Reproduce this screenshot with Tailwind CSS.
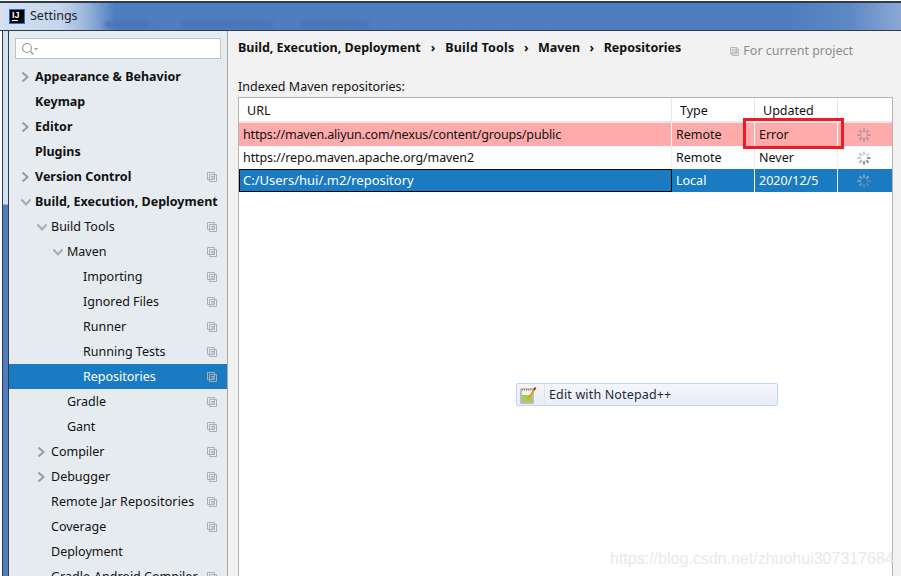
<!DOCTYPE html>
<html lang="en">
<head>
    <meta charset="UTF-8">
    <title>Settings</title>
    <script src="https://cdn.jsdelivr.net/npm/@tailwindcss/browser@4"></script>
</head>
<body class="relative w-[901px] h-[576px] overflow-hidden bg-white font-['Noto_Sans',sans-serif] text-[12.5px] text-[#111]">
    <svg class="hidden">
        <symbol id="copy" viewBox="0 0 10 10">
            <path d="M0.5 0.5H7.5V2.5H9.5V9.5H2.5V7.5H0.5Z M2.5 2.5H7.5V7.5H2.5Z M4 4.5H8 M4 6H8" fill="none" stroke="#a9b0b5" stroke-width="1"/>
        </symbol>
        <symbol id="right" viewBox="0 0 8 10"><path d="M1.5 0.5L6.5 5L1.5 9.5" fill="none" stroke="#9a9a9a" stroke-width="2"/></symbol>
        <symbol id="down" viewBox="0 0 10 8"><path d="M0.5 1.5L5 6.5L9.5 1.5" fill="none" stroke="#a5abaf" stroke-width="2"/></symbol>
        <symbol id="spin" viewBox="0 0 16 16">
            <g stroke-width="2.4" fill="none">
                <path d="M8 0.5V4.5" stroke="#c9c9c9"/><path d="M13.3 2.7L10.5 5.5" stroke="#d4d4d4"/><path d="M15.5 8H11.5" stroke="#8f959b"/><path d="M13.3 13.3L10.5 10.5" stroke="#8f959b"/>
                <path d="M8 15.5V11.5" stroke="#8f959b"/><path d="M2.7 13.3L5.5 10.5" stroke="#b5b5b5"/><path d="M0.5 8H4.5" stroke="#c9c9c9"/><path d="M2.7 2.7L5.5 5.5" stroke="#c9c9c9"/>
            </g>
        </symbol>
        <symbol id="spin-pink" viewBox="0 0 16 16">
            <g stroke-width="2.4" fill="none" stroke="#b09a9f">
                <path d="M8 0.5V4.5"/><path d="M13.3 2.7L10.5 5.5"/><path d="M15.5 8H11.5"/><path d="M13.3 13.3L10.5 10.5"/>
                <path d="M8 15.5V11.5"/><path d="M2.7 13.3L5.5 10.5"/><path d="M0.5 8H4.5"/><path d="M2.7 2.7L5.5 5.5"/>
            </g>
        </symbol>
    </svg>

    <!-- window chrome -->
    <div class="h-[1px] bg-white"></div>
    <div class="h-[2px] bg-[#2f3b4d]"></div>
    <div class="relative h-[27px] flex items-center pl-[9px] overflow-hidden bg-[linear-gradient(90deg,#d5e0f0_0px,#c6d6ea_60px,#9db8dc_85px,#4f7dbf_115px,#4f7dbf_790px,#5e88c5_850px,#8ba8d5_901px)]">
        <div class="w-[16px] h-[15px] shrink-0 bg-black border border-[#1c6fd0] text-white font-['Liberation_Sans',sans-serif] text-[9px] font-bold leading-[8px] pl-[2px] pt-[1px]">IJ<div class="w-[6px] h-[1px] bg-white mt-[1px]"></div></div>
        <span class="ml-[5px] text-[#1a2430]">Settings</span>
        <div class="absolute left-[105px] top-[19px] w-[45px] h-[5px] bg-[#4672b0] blur-[2px]"></div>
        <div class="absolute left-[182px] top-[19px] w-[90px] h-[5px] bg-[#4672b0] blur-[2px]"></div>
        <div class="absolute left-[302px] top-[19px] w-[66px] h-[5px] bg-[#4672b0] blur-[2px]"></div>
    </div>

    <div class="flex h-[546px] border-t border-[#2f3b4d]">
        <div class="w-[2px] bg-white"></div>
        <div class="w-[7px] border-l border-r border-[#2f3b4d] bg-[linear-gradient(180deg,#d5e0f0_0px,#d5e0f0_173px,#4f7dbf_174px,#4f7dbf_100%)]"></div>

        <!-- sidebar -->
        <div class="w-[219px] shrink-0 bg-[#e6ebf0] border-r border-[#a9a9a9] overflow-hidden">
            <div class="ml-[6px] mt-[7px] w-[206px] h-[21px] bg-white border border-[#bfc4c8] flex items-center pl-[5px]">
                <svg width="18" height="14" viewBox="0 0 18 14"><circle cx="6" cy="6" r="4.5" fill="none" stroke="#9a9fa3" stroke-width="1.2"/><path d="M9.5 9.5L12.5 12.5" stroke="#9a9fa3" stroke-width="1.5"/><path d="M13 6H17L15 8.5Z" fill="#9a9fa3"/></svg>
            </div>
            <div class="mt-[5px]">
                <div class="h-[25px] flex items-center pl-[12px] pr-[10px]"><svg class="w-[8px] h-[10px] mr-[6px] shrink-0"><use href="#right"/></svg><span class="pt-[2px] font-bold">Appearance &amp; Behavior</span></div>
                <div class="h-[25px] flex items-center pl-[26px] pr-[10px]"><span class="pt-[2px] font-bold">Keymap</span></div>
                <div class="h-[25px] flex items-center pl-[12px] pr-[10px]"><svg class="w-[8px] h-[10px] mr-[6px] shrink-0"><use href="#right"/></svg><span class="pt-[2px] font-bold">Editor</span></div>
                <div class="h-[25px] flex items-center pl-[26px] pr-[10px]"><span class="pt-[2px] font-bold">Plugins</span></div>
                <div class="h-[25px] flex items-center pl-[12px] pr-[10px]"><svg class="w-[8px] h-[10px] mr-[6px] shrink-0"><use href="#right"/></svg><span class="pt-[2px] font-bold">Version Control</span><svg class="w-[10px] h-[10px] ml-auto"><use href="#copy"/></svg></div>
                <div class="h-[25px] flex items-center pl-[12px]"><svg class="w-[10px] h-[8px] mr-[4px] shrink-0"><use href="#down"/></svg><span class="pt-[2px] font-bold whitespace-nowrap">Build, Execution, Deployment</span></div>
                <div class="h-[25px] flex items-center pl-[28px] pr-[10px]"><svg class="w-[10px] h-[8px] mr-[4px] shrink-0"><use href="#down"/></svg><span class="pt-[2px]">Build Tools</span><svg class="w-[10px] h-[10px] ml-auto"><use href="#copy"/></svg></div>
                <div class="h-[25px] flex items-center pl-[44px] pr-[10px]"><svg class="w-[10px] h-[8px] mr-[4px] shrink-0"><use href="#down"/></svg><span class="pt-[2px]">Maven</span><svg class="w-[10px] h-[10px] ml-auto"><use href="#copy"/></svg></div>
                <div class="h-[25px] flex items-center pl-[74px] pr-[10px]"><span class="pt-[2px]">Importing</span><svg class="w-[10px] h-[10px] ml-auto"><use href="#copy"/></svg></div>
                <div class="h-[25px] flex items-center pl-[74px] pr-[10px]"><span class="pt-[2px]">Ignored Files</span><svg class="w-[10px] h-[10px] ml-auto"><use href="#copy"/></svg></div>
                <div class="h-[25px] flex items-center pl-[74px] pr-[10px]"><span class="pt-[2px]">Runner</span><svg class="w-[10px] h-[10px] ml-auto"><use href="#copy"/></svg></div>
                <div class="h-[25px] flex items-center pl-[74px] pr-[10px]"><span class="pt-[2px]">Running Tests</span><svg class="w-[10px] h-[10px] ml-auto"><use href="#copy"/></svg></div>
                <div class="h-[25px] flex items-center pl-[74px] pr-[10px] bg-[#1a7bc3] text-white"><span class="pt-[2px]">Repositories</span><svg class="w-[10px] h-[10px] ml-auto"><use href="#copy"/></svg></div>
                <div class="h-[25px] flex items-center pl-[58px] pr-[10px]"><span class="pt-[2px]">Gradle</span><svg class="w-[10px] h-[10px] ml-auto"><use href="#copy"/></svg></div>
                <div class="h-[25px] flex items-center pl-[58px] pr-[10px]"><span class="pt-[2px]">Gant</span><svg class="w-[10px] h-[10px] ml-auto"><use href="#copy"/></svg></div>
                <div class="h-[25px] flex items-center pl-[28px] pr-[10px]"><svg class="w-[8px] h-[10px] mr-[6px] shrink-0"><use href="#right"/></svg><span class="pt-[2px]">Compiler</span><svg class="w-[10px] h-[10px] ml-auto"><use href="#copy"/></svg></div>
                <div class="h-[25px] flex items-center pl-[28px] pr-[10px]"><svg class="w-[8px] h-[10px] mr-[6px] shrink-0"><use href="#right"/></svg><span class="pt-[2px]">Debugger</span><svg class="w-[10px] h-[10px] ml-auto"><use href="#copy"/></svg></div>
                <div class="h-[25px] flex items-center pl-[42px] pr-[10px]"><span class="pt-[2px] tracking-[0.12px]">Remote Jar Repositories</span><svg class="w-[10px] h-[10px] ml-auto"><use href="#copy"/></svg></div>
                <div class="h-[25px] flex items-center pl-[42px] pr-[10px]"><span class="pt-[2px]">Coverage</span><svg class="w-[10px] h-[10px] ml-auto"><use href="#copy"/></svg></div>
                <div class="h-[25px] flex items-center pl-[42px] pr-[10px]"><span class="pt-[2px]">Deployment</span></div>
                <div class="h-[25px] flex items-center pl-[42px] pr-[10px]"><span class="pt-[2px]">Gradle-Android Compiler</span><svg class="w-[10px] h-[10px] ml-auto"><use href="#copy"/></svg></div>
            </div>
        </div>

        <!-- content -->
        <div class="flex-1 bg-[#f2f2f2] pl-[10px] pr-[8px] min-w-0">
            <div class="h-[34px] flex items-center">
                <span class="font-bold">Build, Execution, Deployment</span>
                <span class="font-bold mx-[10px]">›</span>
                <span class="font-bold tracking-[0.2px]">Build Tools</span>
                <span class="font-bold mx-[9.5px]">›</span>
                <span class="font-bold">Maven</span>
                <span class="font-bold mx-[9.5px]">›</span>
                <span class="font-bold">Repositories</span>
                <span class="ml-[49px] mt-[7px] flex items-center text-[#8c8c8c]"><svg class="w-[9px] h-[9px] mr-[4px]"><use href="#copy"/></svg>For current project</span>
            </div>
            <div class="mt-[11px] h-[21px] pt-[2px] flex items-center">Indexed Maven repositories:</div>

            <!-- table -->
            <div class="h-[480px] bg-white border border-[#b5b5b5]">
                <div class="h-[25px] flex border-b-2 border-[#e6e6e6]">
                    <div class="w-[433px] pl-[8px] pt-[4px] border-r border-[#e6e6e6]">URL</div>
                    <div class="w-[83px] pl-[8px] pt-[4px] border-r border-[#e6e6e6]">Type</div>
                    <div class="w-[83px] pl-[8px] pt-[4px] border-r border-[#e6e6e6]">Updated</div>
                </div>
                <div class="h-[23px] flex items-center bg-[#ffabab]">
                    <div class="w-[433px] h-full pl-[4px] pt-[2px] flex items-center border-r border-white tracking-[-0.15px]">https://maven.aliyun.com/nexus/content/groups/public</div>
                    <div class="w-[83px] h-full pl-[4px] pt-[2px] flex items-center border-r border-white">Remote</div>
                    <div class="w-[83px] h-full pl-[4px] pt-[2px] flex items-center border-r border-white">Error</div>
                    <svg class="w-[14px] h-[14px] ml-[19px]"><use href="#spin-pink"/></svg>
                </div>
                <div class="h-[23px] flex items-center">
                    <div class="w-[433px] h-full pl-[4px] pt-[2px] flex items-center border-r border-[#f0f0f0] tracking-[-0.1px]">https://repo.maven.apache.org/maven2</div>
                    <div class="w-[83px] h-full pl-[4px] pt-[2px] flex items-center border-r border-[#f0f0f0]">Remote</div>
                    <div class="w-[83px] h-full pl-[4px] pt-[2px] flex items-center border-r border-[#f0f0f0]">Never</div>
                    <svg class="w-[14px] h-[14px] ml-[19px]"><use href="#spin"/></svg>
                </div>
                <div class="h-[23px] flex items-center bg-[#1a7bc3] text-white">
                    <div class="w-[433px] h-full pl-[3px] flex items-center border border-black text-[13px]">C:/Users/hui/.m2/repository</div>
                    <div class="w-[83px] h-full pl-[4px] pt-[2px] flex items-center border-r border-white">Local</div>
                    <div class="w-[83px] h-full pl-[4px] pt-[2px] flex items-center border-r border-white">2020/12/5</div>
                    <svg class="w-[14px] h-[14px] ml-[19px] opacity-50"><use href="#spin"/></svg>
                </div>
            </div>
        </div>
    </div>

    <!-- red annotation box -->
    <div class="absolute left-[743px] top-[118px] w-[101px] h-[31px] border-[3px] border-[#ed1c24]"></div>

    <!-- context menu item -->
    <div class="absolute left-[516px] top-[383px] w-[262px] h-[23px] flex items-center rounded-[2px] border border-[#b8d6f5] bg-[linear-gradient(180deg,#f4f6fb,#e9edf5)] text-[#1e2a3a]">
        <svg class="w-[18px] h-[18px] ml-[2px]" viewBox="0 0 18 18">
            <path d="M2 3H14V17H2Z" fill="#f4f4e8" stroke="#8a8a7a"/>
            <path d="M3 4H13" stroke="#77776a" stroke-dasharray="1 1"/>
            <path d="M3 9H13V16H3Z" fill="#a6cc5e"/>
            <path d="M9 13L15 4" stroke="#e0a020" stroke-width="2"/>
            <path d="M15 4L16.5 1.5" stroke="#a02030" stroke-width="2"/>
        </svg>
        <div class="w-px h-full bg-[#dfe3ea] ml-[7px]"></div>
        <span class="ml-[4px] pt-[2px] tracking-[0.15px]">Edit with Notepad++</span>
    </div>

    <!-- watermark -->
    <div class="absolute left-[610px] top-[547px] font-['Liberation_Sans',sans-serif] text-[16px] text-[#e9e9e9]">https://blog.csdn.net/zhuohui307317684</div>
</body>
</html>
